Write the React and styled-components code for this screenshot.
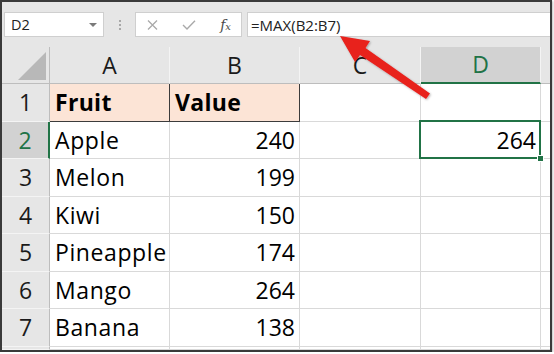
import React from "react";
import styled, { createGlobalStyle, css } from "styled-components";

const Global = createGlobalStyle`
  html, body { margin: 0; padding: 0; background: #ffffff; }
  body { font-family: "Open Sans", "Liberation Sans", sans-serif; }
`;

const GREEN = "#217346";
const GRID = "#d9d9d9";
const HEAD_BG = "#e6e6e6";
const HEAD_SEL = "#d2d2d2";

const Frame = styled.div`
  position: relative;
  box-sizing: border-box;
  width: 552px;
  height: 352px;
  border: 2px solid #3a3a3a;
  background: #ffffff;
  overflow: hidden;
  box-shadow: 1px 1px 2px rgba(0, 0, 0, 0.25);
  display: flex;
  flex-direction: column;
`;

const FormulaBar = styled.div`
  display: flex;
  align-items: stretch;
  height: 45px;
  box-sizing: border-box;
  padding: 10px 0 10px 2px;
  background: ${HEAD_BG};
`;

const Box = styled.div`
  box-sizing: border-box;
  height: 25px;
  background: #ffffff;
  border: 1px solid #cfcfcf;
  display: flex;
  align-items: center;
`;

const NameBox = styled(Box)`
  width: 100px;
  padding: 0 6px 0 6px;
  justify-content: space-between;
  font-size: 14.5px;
  color: #222;
`;

const Caret = styled.span`
  width: 0;
  height: 0;
  border-left: 4px solid transparent;
  border-right: 4px solid transparent;
  border-top: 4px solid #7a7a7a;
`;

const Grip = styled.div`
  width: 31px;
  display: flex;
  flex-direction: column;
  align-items: center;
  justify-content: center;
  gap: 2px;
`;

const Dot = styled.span`
  width: 2px;
  height: 2px;
  background: #a8a8a8;
`;

const FxBox = styled(Box)`
  width: 107px;
  padding: 0 10px 0 11px;
  justify-content: space-between;
`;

const Fx = styled.span`
  font-family: "DejaVu Serif", "Liberation Serif", serif;
  font-style: italic;
  font-size: 14px;
  color: #4a4a4a;
  line-height: 1;
  sub {
    font-size: 10px;
    vertical-align: baseline;
  }
`;

const FormulaInput = styled(Box)`
  flex: 1;
  margin-left: 5px;
  border-right: none;
  padding-left: 3px;
  font-size: 15px;
  color: #222;
`;

const Sheet = styled.div`
  flex: 1;
  display: grid;
  grid-template-columns: 48px 120px 130px 121px 120px 1fr;
  grid-template-rows: 37px 38px 37px 38px 37px 38px 37px 38px 1fr;
`;

const Cell = styled.div`
  position: relative;
  box-sizing: border-box;
  display: flex;
  align-items: center;
  border-right: 1px solid ${GRID};
  border-bottom: 1px solid ${GRID};
  font-size: 23px;
  color: #000;
  padding: 0 4px 1px 5px;
  background: #ffffff;
  white-space: nowrap;
  letter-spacing: ${(p) => (p.$right ? "0" : "0.6px")};
  justify-content: ${(p) => (p.$right ? "flex-end" : "flex-start")};
  ${(p) =>
    p.$title &&
    css`
      background: #fce4d6;
      font-weight: 700;
      letter-spacing: 0.3px;
      border-right-color: #3c3c3c;
      border-bottom-color: #3c3c3c;
    `}
`;

const ColHead = styled.div`
  box-sizing: border-box;
  display: flex;
  align-items: center;
  justify-content: center;
  background: ${(p) => (p.$sel ? HEAD_SEL : HEAD_BG)};
  color: ${(p) => (p.$sel ? GREEN : "#1a1a1a")};
  border-right: 1px solid #f4f4f4;
  border-bottom: ${(p) => (p.$sel ? `2px solid ${GREEN}` : "1px solid #bdbdbd")};
  font-size: 23px;
  padding-bottom: 1px;
`;

const RowHead = styled.div`
  box-sizing: border-box;
  display: flex;
  align-items: center;
  justify-content: center;
  background: ${(p) => (p.$sel ? HEAD_SEL : HEAD_BG)};
  color: ${(p) => (p.$sel ? GREEN : "#1a1a1a")};
  border-right: ${(p) => (p.$sel ? `2px solid ${GREEN}` : "1px solid #bdbdbd")};
  border-bottom: 1px solid #f4f4f4;
  font-size: 23px;
  padding-bottom: 1px;
`;

const Corner = styled.div`
  box-sizing: border-box;
  background: ${HEAD_BG};
  border-right: 1px solid #bdbdbd;
  border-bottom: 1px solid #bdbdbd;
  display: flex;
  align-items: flex-end;
  justify-content: flex-end;
  padding: 0 3px 3px 0;
`;

const Selection = styled.div`
  position: absolute;
  left: -2px;
  top: -2px;
  right: -1px;
  bottom: -1px;
  border: 2px solid ${GREEN};
  z-index: 2;
  pointer-events: none;
`;

const Handle = styled.span`
  position: absolute;
  right: -5px;
  bottom: -5px;
  width: 5px;
  height: 5px;
  background: ${GREEN};
  border: 1px solid #ffffff;
`;

const ArrowSvg = styled.svg`
  position: absolute;
  left: -2px;
  top: -2px;
  width: 552px;
  height: 352px;
  z-index: 5;
  pointer-events: none;
`;

const cols = ["A", "B", "C", "D"];
const rows = [
  ["Apple", "240"],
  ["Melon", "199"],
  ["Kiwi", "150"],
  ["Pineapple", "174"],
  ["Mango", "264"],
  ["Banana", "138"],
];

export default function App() {
  return (
    <>
      <Global />
      <Frame>
        <FormulaBar>
          <NameBox>
            <span>D2</span>
            <Caret />
          </NameBox>
          <Grip>
            <Dot />
            <Dot />
            <Dot />
          </Grip>
          <FxBox>
            <svg width="11" height="10" viewBox="0 0 11 10">
              <path d="M1 0.5 L10 9.5 M10 0.5 L1 9.5" stroke="#a9a9a9" strokeWidth="1.3" fill="none" />
            </svg>
            <svg width="14" height="10" viewBox="0 0 14 10">
              <path d="M1 5 L5 9 L13 0.8" stroke="#a9a9a9" strokeWidth="1.4" fill="none" />
            </svg>
            <Fx>
              f<sub>x</sub>
            </Fx>
          </FxBox>
          <FormulaInput>=MAX(B2:B7)</FormulaInput>
        </FormulaBar>
        <Sheet>
          <Corner>
            <svg width="28" height="28" viewBox="0 0 28 28">
              <polygon points="28,0 28,28 0,28" fill="#b8b8b8" />
            </svg>
          </Corner>
          {cols.map((c) => (
            <ColHead key={c} $sel={c === "D"}>
              {c}
            </ColHead>
          ))}
          <ColHead />

          <RowHead>1</RowHead>
          <Cell $title>Fruit</Cell>
          <Cell $title>Value</Cell>
          <Cell />
          <Cell />
          <Cell />

          {rows.map(([fruit, val], i) => (
            <React.Fragment key={fruit}>
              <RowHead $sel={i === 0}>{i + 2}</RowHead>
              <Cell>{fruit}</Cell>
              <Cell $right>{val}</Cell>
              <Cell />
              <Cell $right>
                {i === 0 && (
                  <>
                    264
                    <Selection>
                      <Handle />
                    </Selection>
                  </>
                )}
              </Cell>
              <Cell />
            </React.Fragment>
          ))}

          <RowHead />
          <Cell />
          <Cell />
          <Cell />
          <Cell />
          <Cell />
        </Sheet>
        <ArrowSvg viewBox="0 0 552 352">
          <defs>
            <filter id="sh" x="-20%" y="-20%" width="140%" height="140%">
              <feDropShadow dx="1" dy="1" stdDeviation="1" floodColor="#000" floodOpacity="0.3" />
            </filter>
          </defs>
          <polygon
            points="340,36 370,41 365.5,48 430,93.5 426,99 360,55 355,62"
            fill="#e8201c"
            filter="url(#sh)"
          />
        </ArrowSvg>
      </Frame>
    </>
  );
}
